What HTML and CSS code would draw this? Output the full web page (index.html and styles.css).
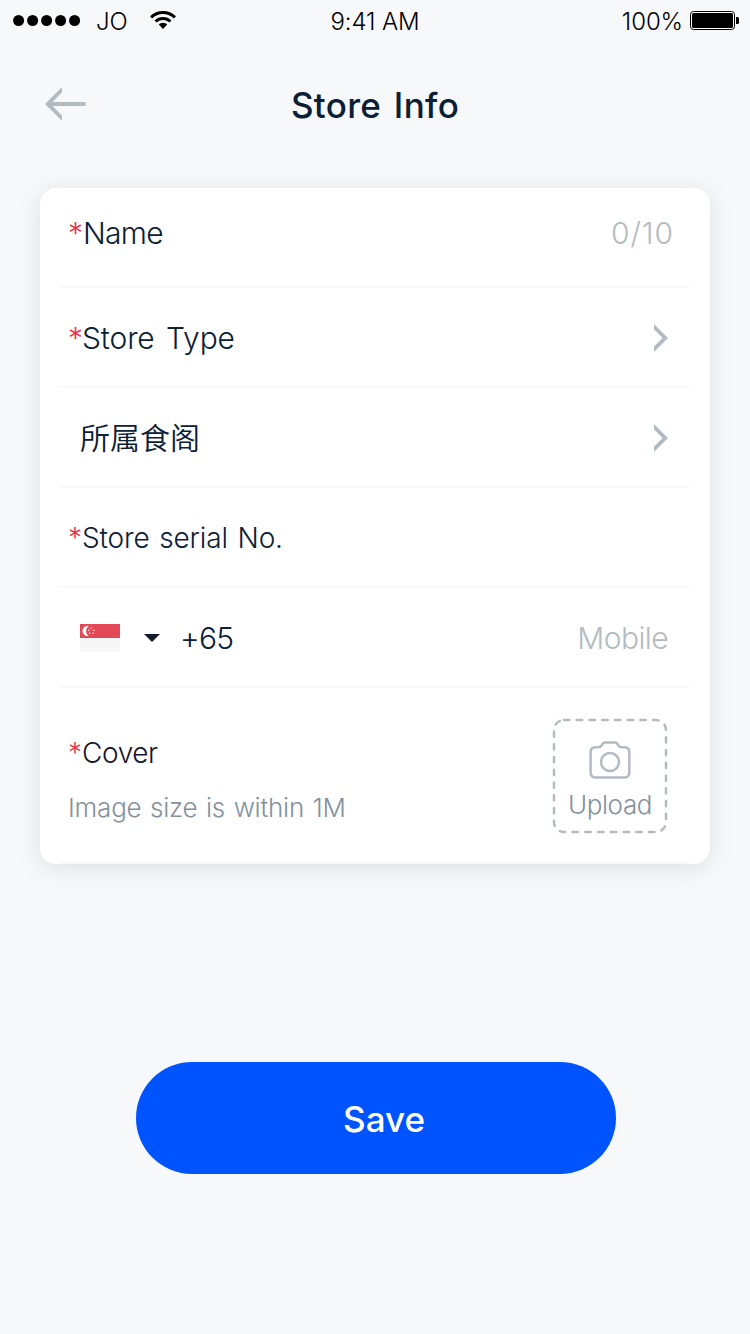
FILE: index.html
```html
<!DOCTYPE html>
<html lang="en">
<head>
<meta charset="utf-8">
<title>Store Info</title>
<link rel="stylesheet" href="styles.css">
</head>
<body>
<main class="screen">
  <header class="status">
    <div class="status-left">
      <svg class="signal" width="68" height="12" viewBox="0 0 68 12"><circle cx="5.6" cy="6.500" r="5.5"/><circle cx="19.6" cy="6.500" r="5.5"/><circle cx="33.6" cy="6.500" r="5.5"/><circle cx="47.6" cy="6.500" r="5.5"/><circle cx="61.6" cy="6.500" r="5.5"/></svg>
      <span class="carrier">JO</span>
      <svg class="wifi" width="26" height="18" viewBox="0 0 26 18"><path d="M13 0C18 0 22.500 1.900 26 5.200L23.800 7.400C20.900 4.600 17.200 3 13 3S5.100 4.600 2.200 7.400L0 5.200C3.500 1.900 8 0 13 0Z"/><path d="M13 6C16.200 6 19.200 7.200 21.500 9.400L19.300 11.500C17.600 9.900 15.400 9 13 9S8.400 9.900 6.700 11.500L4.500 9.400C6.800 7.200 9.800 6 13 6Z"/><path d="M13 11.700C14.700 11.700 16.200 12.400 17.200 13.500L13 17.900L8.800 13.500C9.800 12.400 11.300 11.700 13 11.700Z"/></svg>
    </div>
    <span class="time">9:41 AM</span>
    <div class="status-right">
      <span class="percent">100%</span>
      <svg class="battery" width="49" height="19" viewBox="0 0 49 19"><rect x=".5" y=".5" width="44" height="18" rx="3" fill="#fff" stroke="#000"/><rect x="2" y="2" width="41" height="15" rx="1.500"/><path d="M46 6h1.500q1.500 0 1.500 1.500v4q0 1.500-1.500 1.500H46z"/></svg>
    </div>
  </header>

  <nav class="nav">
    <svg class="back" width="42" height="34" viewBox="0 0 42 34"><path d="M17 0V5.300L7.500 15H39a2 2 0 0 1 0 4H7.500L17 28.500V33.800L0 17Z" fill="#b3bbc2"/></svg>
    <h1 class="title">Store Info</h1>
  </nav>

  <section class="card">
    <div class="row row-name">
      <span class="label"><i class="req">*</i><span class="t-name">Name</span></span>
      <span class="count">0/10</span>
    </div>
    <div class="row">
      <span class="label"><i class="req">*</i><span class="t-type">Store Type</span></span>
      <svg class="chevron" width="14" height="28" viewBox="0 0 14 28"><path d="M0 0V5.500L8.500 14L0 22.500V28L14 14Z"/></svg>
    </div>
    <div class="row">
      <span class="court">所属食阁</span>
      <svg class="chevron" width="14" height="28" viewBox="0 0 14 28"><path d="M0 0V5.500L8.500 14L0 22.500V28L14 14Z"/></svg>
    </div>
    <div class="row">
      <span class="label small"><i class="req">*</i><span class="t-serial">Store serial No.</span></span>
    </div>
    <div class="row">
      <div class="dial">
        <svg class="flag" width="40" height="28" viewBox="0 0 40 28"><rect width="40" height="28" fill="#f7f7f7"/><rect width="40" height="14" fill="#e34856"/><path d="M8.800 2.200A5 5 0 1 0 8.800 11.800A5.600 5.600 0 0 1 8.800 2.200Z" fill="#fff"/><g fill="#fff"><circle cx="11.200" cy="4" r=".7"/><circle cx="8.700" cy="6.200" r=".7"/><circle cx="14" cy="6.200" r=".7"/><circle cx="9.700" cy="9.300" r=".7"/><circle cx="13" cy="9.300" r=".7"/></g></svg>
        <svg class="caret" width="16" height="8" viewBox="0 0 16 8"><path d="M0 0H16L8 8Z" fill="#161b2a"/></svg>
        <span class="code">+65</span>
      </div>
      <span class="mobile">Mobile</span>
    </div>
    <div class="row row-cover">
      <div class="cover-text">
        <span class="label cover small"><i class="req">*</i><span class="t-cover">Cover</span></span>
        <span class="hint">Image size is within 1M</span>
      </div>
      <div class="upload">
        <svg class="dashes" width="116" height="116" viewBox="0 0 116 116"><rect x="2" y="2" width="112" height="112" rx="10" fill="none" stroke="#b3bbc2" stroke-width="2.500" stroke-linecap="round" stroke-dasharray="5.400 7.350"/></svg>
        <svg class="camera" width="42" height="38" viewBox="0 0 42 38"><g fill="none" stroke="#b3bbc2" stroke-width="2.500" stroke-linejoin="round"><path d="M6.500 6.300H9Q11.500 6.300 12.700 4.300L13.500 3Q14.500 1.500 16 1.500H26Q27.500 1.500 28.500 3L29.300 4.300Q30.500 6.300 33 6.300H35.500Q40.300 6.300 40.300 11.300V31.500Q40.300 36.400 35.500 36.400H6.500Q1.600 36.400 1.600 31.500V11.300Q1.600 6.300 6.500 6.300Z"/><circle cx="21" cy="21" r="9"/></g></svg>
        <span class="upload-text">Upload</span>
      </div>
    </div>
  </section>

  <button class="save">Save</button>
</main>
</body>
</html>
```
FILE: styles.css
```css
* { box-sizing: border-box; }
body { margin: 0; background: #f7f8fa; font-family: Inter, "Noto Sans CJK SC", sans-serif; font-weight: 330; color: #0b2034; }
svg { display: block; flex: none; }
.screen { width: 750px; height: 1334px; display: flex; flex-direction: column; }
.status { height: 40px; padding: 0 11px 0 13px; display: grid; grid-template-columns: 1fr auto 1fr; align-items: center; color: #000; font-size: 24px; font-weight: 300; line-height: 28px; }
.status-left, .status-right { display: flex; align-items: center; }
.status-right { justify-content: flex-end; gap: 7px; }
.carrier, .time, .percent { padding-top: 3px; letter-spacing: -.1px; }
.time { margin-right: 2px; }
.carrier { margin: 0 22px 0 15px; }
.nav { height: 128px; padding: 0 45px; display: grid; grid-template-columns: 42px 1fr 42px; align-items: center; }
.title { margin: 0; padding-top: 1px; text-align: center; font-size: 35px; font-weight: 500; line-height: 42px; letter-spacing: .3px; word-spacing: 3px; }
.card { width: 670px; height: 676px; margin: 20px 40px 0; padding: 0 20px; border-radius: 16px; background: #fff; box-shadow: 0 4px 24px rgba(0, 0, 0, .1); }
.row { height: 100px; padding: 2px 22px 0 8px; border-bottom: 2px solid #f7f8fa; display: flex; align-items: center; justify-content: space-between; font-size: 30px; line-height: 36px; white-space: nowrap; }
.label { display: flex; }
.req { width: 15px; color: #e92f48; font-style: normal; }
.row-name { padding: 0 17px 8px 8px; }
.t-name { letter-spacing: -.7px; }
.t-type { margin-left: -1px; letter-spacing: -.1px; word-spacing: 3px; }
.t-serial { letter-spacing: -.15px; word-spacing: 2px; }
.t-cover { letter-spacing: -.4px; }
.count, .mobile { color: #b3bbc2; }
.count { letter-spacing: .9px; margin-right: -1px; }
.mobile { letter-spacing: -.6px; }
.code { letter-spacing: -.7px; }
.chevron { fill: #b3bbc2; }
.court { margin-left: 12px; font-weight: 350; }
.small { font-size: 28px; }
.small .req { width: 14px; }
.dial { display: flex; align-items: center; margin-left: 12px; }
.caret { margin: 0 20px 0 24px; }
.row-cover { height: 176px; }
.cover-text { display: flex; flex-direction: column; gap: 19px; padding-top: 8px; }
.cover { color: #16162a; }
.hint { color: #84919c; font-size: 26px; letter-spacing: -.22px; word-spacing: 1.5px; }
.upload { width: 116px; height: 116px; position: relative; display: flex; flex-direction: column; align-items: center; padding-top: 23px; }
.dashes { position: absolute; inset: 0; }
.upload-text { margin-top: 9px; font-size: 26px; line-height: 34px; color: #84919c; letter-spacing: -.4px; }
.save { width: 480px; height: 112px; margin: 198px 0 0 136px; padding: 1px 0 0 16px; border: 0; border-radius: 56px; background: #0054ff; color: #fff; font: 500 35px/42px Inter, sans-serif; }
```
